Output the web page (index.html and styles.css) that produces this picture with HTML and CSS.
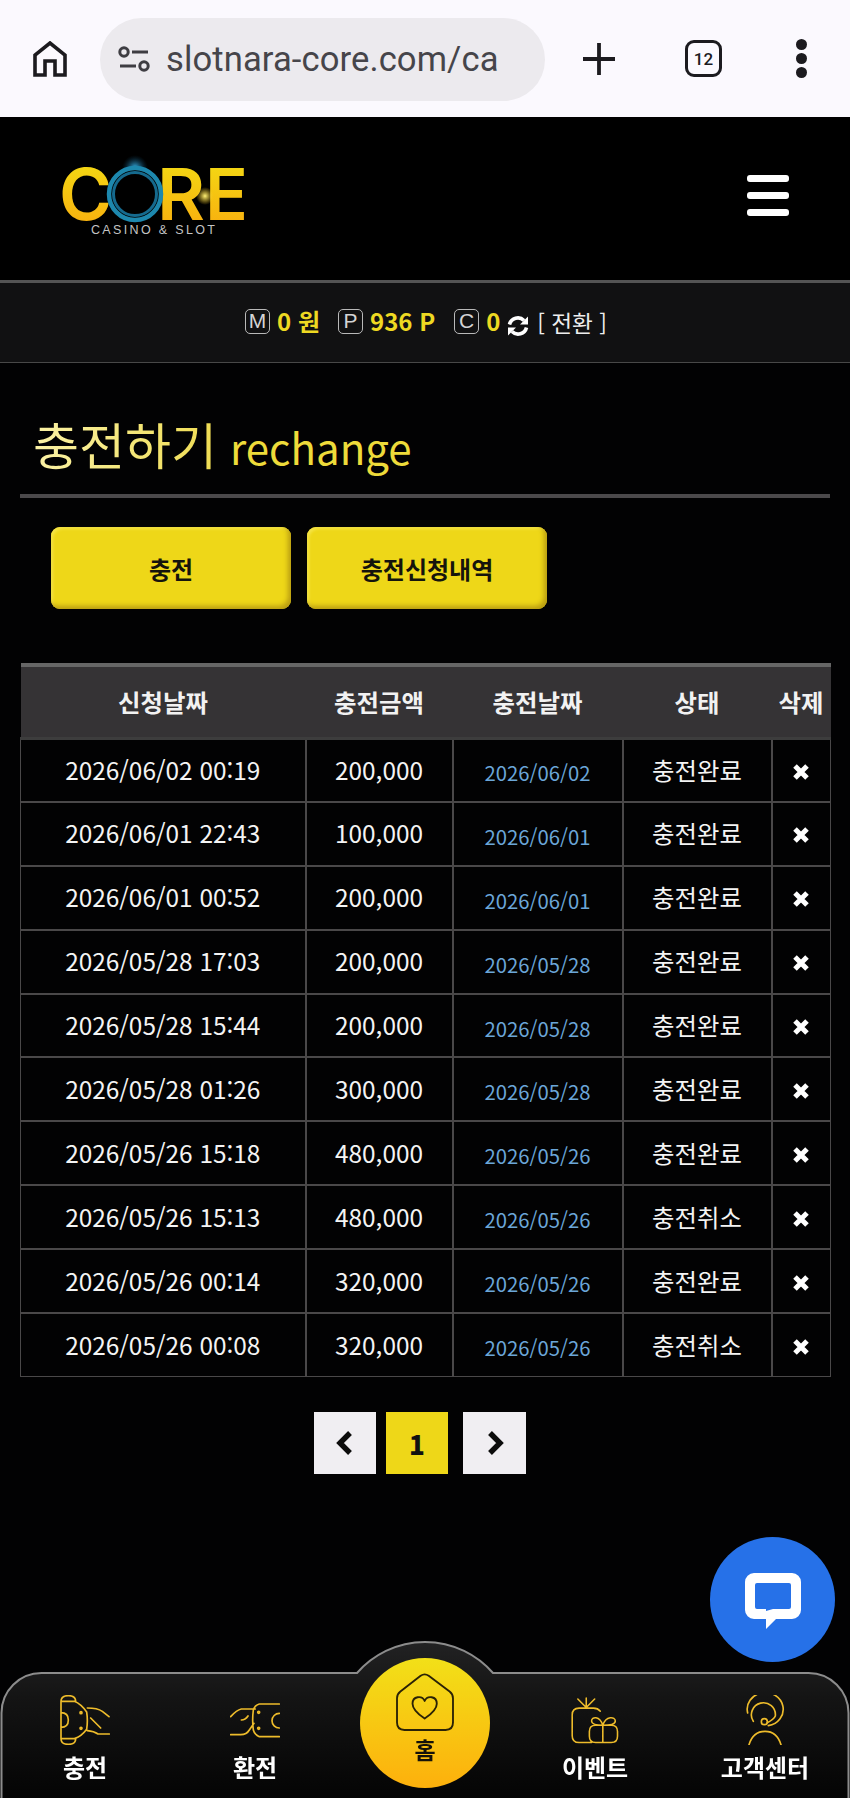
FILE: index.html
```html
<!DOCTYPE html>
<html lang="ko">
<head>
<meta charset="utf-8">
<title>충전하기</title>
<link rel="stylesheet" href="styles.css">
</head>
<body>
<div class="chrome">
  <svg class="chrome-home" viewBox="0 0 34 36"><path d="M2 34V14L17 2l15 12v20H22V20H12v14z"/></svg>
  <div class="url">
    <svg class="url-tune" viewBox="0 0 32 26"><circle cx="6" cy="6" r="4.2"/><path d="M14 6h16M2 20h16"/><circle cx="26" cy="20" r="4.2"/></svg>
    <span class="url-text">slotnara-core.com/ca</span>
  </div>
  <svg class="chrome-plus" viewBox="0 0 34 34"><path d="M17 1v32M1 17h32"/></svg>
  <div class="tabs-count">12</div>
  <div class="chrome-menu"><i></i><i></i><i></i></div>
</div>

<header class="site-head">
  <svg class="logo" viewBox="0 0 190 80">
    <defs>
      <linearGradient id="lg" x1="0" y1="0" x2="0" y2="1"><stop offset="0" stop-color="#f2e014"/><stop offset="1" stop-color="#f9a90e"/></linearGradient>
      <radialGradient id="fl"><stop offset="0" stop-color="#37b6f0"/><stop offset="1" stop-color="#0b3a55" stop-opacity="0"/></radialGradient>
      <radialGradient id="fy"><stop offset="0" stop-color="#fff27a"/><stop offset="1" stop-color="#f6c510" stop-opacity="0"/></radialGradient>
    </defs>
    <circle cx="75" cy="13" r="13" fill="url(#fl)"/>
    <text class="logo-l" x="-1" y="65" fill="url(#lg)">C</text>
    <text class="logo-l" x="97" y="65" fill="url(#lg)" textLength="48" lengthAdjust="spacingAndGlyphs">R</text>
    <text class="logo-l" x="145" y="65" fill="url(#lg)" textLength="43" lengthAdjust="spacingAndGlyphs">E</text>
    <circle cx="75" cy="39" r="26" class="ring"/>
    <circle cx="75" cy="39" r="21.5" class="ring-in"/>
    <circle cx="145" cy="41" r="9" fill="url(#fy)"/>
    <text class="logo-sub" x="31" y="78.5" textLength="124">CASINO &amp; SLOT</text>
  </svg>
  <div class="burger"><i></i><i></i><i></i></div>
</header>

<div class="info">
  <span class="badge">M</span><b class="val val-m">0 원</b>
  <span class="badge">P</span><b class="val val-p">936 P</b>
  <span class="badge">C</span><b class="val val-c">0</b>
  <svg class="sync" viewBox="0 0 24 24"><path class="sync-s" d="M3.5 10.5A8.6 8.6 0 0 1 18 6.5"/><path class="sync-f" d="M22 2.5v8h-8z"/><path class="sync-s" d="M20.5 13.5A8.6 8.6 0 0 1 6 17.5"/><path class="sync-f" d="M2 21.5v-8h8z"/></svg>
  <span class="switch">[ 전환 ]</span>
</div>

<main>
  <h1 class="title"><span class="title-ko">충전하기</span> <span class="title-en">rechange</span></h1>

  <div class="tabs">
    <a class="tab">충전</a>
    <a class="tab">충전신청내역</a>
  </div>

  <table class="list">
    <colgroup><col class="c1"><col class="c2"><col class="c3"><col class="c4"><col class="c5"></colgroup>
    <thead><tr><th>신청날짜</th><th>충전금액</th><th>충전날짜</th><th>상태</th><th>삭제</th></tr></thead>
    <tbody>
      <tr><td>2026/06/02 00:19</td><td>200,000</td><td class="date">2026/06/02</td><td>충전완료</td><td class="del"><svg viewBox="0 0 18 18"><path d="M3 3l12 12M15 3L3 15"/></svg></td></tr>
      <tr><td>2026/06/01 22:43</td><td>100,000</td><td class="date">2026/06/01</td><td>충전완료</td><td class="del"><svg viewBox="0 0 18 18"><path d="M3 3l12 12M15 3L3 15"/></svg></td></tr>
      <tr><td>2026/06/01 00:52</td><td>200,000</td><td class="date">2026/06/01</td><td>충전완료</td><td class="del"><svg viewBox="0 0 18 18"><path d="M3 3l12 12M15 3L3 15"/></svg></td></tr>
      <tr><td>2026/05/28 17:03</td><td>200,000</td><td class="date">2026/05/28</td><td>충전완료</td><td class="del"><svg viewBox="0 0 18 18"><path d="M3 3l12 12M15 3L3 15"/></svg></td></tr>
      <tr><td>2026/05/28 15:44</td><td>200,000</td><td class="date">2026/05/28</td><td>충전완료</td><td class="del"><svg viewBox="0 0 18 18"><path d="M3 3l12 12M15 3L3 15"/></svg></td></tr>
      <tr><td>2026/05/28 01:26</td><td>300,000</td><td class="date">2026/05/28</td><td>충전완료</td><td class="del"><svg viewBox="0 0 18 18"><path d="M3 3l12 12M15 3L3 15"/></svg></td></tr>
      <tr><td>2026/05/26 15:18</td><td>480,000</td><td class="date">2026/05/26</td><td>충전완료</td><td class="del"><svg viewBox="0 0 18 18"><path d="M3 3l12 12M15 3L3 15"/></svg></td></tr>
      <tr><td>2026/05/26 15:13</td><td>480,000</td><td class="date">2026/05/26</td><td>충전취소</td><td class="del"><svg viewBox="0 0 18 18"><path d="M3 3l12 12M15 3L3 15"/></svg></td></tr>
      <tr><td>2026/05/26 00:14</td><td>320,000</td><td class="date">2026/05/26</td><td>충전완료</td><td class="del"><svg viewBox="0 0 18 18"><path d="M3 3l12 12M15 3L3 15"/></svg></td></tr>
      <tr><td>2026/05/26 00:08</td><td>320,000</td><td class="date">2026/05/26</td><td>충전취소</td><td class="del"><svg viewBox="0 0 18 18"><path d="M3 3l12 12M15 3L3 15"/></svg></td></tr>
    </tbody>
  </table>

  <nav class="pager">
    <a class="pg"><svg viewBox="0 0 20 28"><path d="M15 4L5 14l10 10"/></svg></a>
    <a class="pg pg-on">1</a>
    <a class="pg pg-next"><svg viewBox="0 0 20 28"><path d="M5 4l10 10L5 24"/></svg></a>
  </nav>
</main>

<a class="chat">
  <svg viewBox="0 0 58 58"><path d="M10 1h38a9 9 0 0 1 9 9v28a9 9 0 0 1-9 9H32L22 57V47H10a9 9 0 0 1-9-9V10a9 9 0 0 1 9-9z" fill="#fff"/><path d="M13 11h32a2 2 0 0 1 2 2v22a2 2 0 0 1-2 2H30l-1 0-7 2v-2H13a2 2 0 0 1-2-2V13a2 2 0 0 1 2-2z" fill="#2671e8"/></svg>
</a>

<footer class="bottom">
  <svg class="bottom-bg" viewBox="0 0 850 156">
    <defs><linearGradient id="nb" x1="0" y1="0" x2="0" y2="1"><stop offset="0" stop-color="#222223"/><stop offset="0.35" stop-color="#141414"/><stop offset="1" stop-color="#040404"/></linearGradient></defs>
    <path d="M1.5 158V71A40 40 0 0 1 41.5 31H357A90 90 0 0 1 493 31H808.5A40 40 0 0 1 848.5 71V158z" fill="url(#nb)" stroke="#8c8c8c" stroke-width="2"/>
  </svg>
  <div class="bottom-grid">
    <a class="item">
      <svg class="ico" viewBox="180 193 150 150"><path d="M183 212q0-17 22-17t22 17M183 212v112q0 17 22 17t22-17M183 212h40q20 8 37 32 4 26 0 52-16 22-37 28h-40M183 246q22 0 22 22t-22 22M262 232q30 0 45 10l20 16M272 262l30 30M262 300q20 2 32 10h34"/><circle cx="243" cy="246" r="3"/><circle cx="243" cy="293" r="3"/></svg>
      <span class="lbl">충전</span>
    </a>
    <a class="item">
      <svg class="ico" viewBox="690 193 150 150"><path d="M838 220h-60q-14 4-18 18-4 30 0 60 4 14 18 20h60M838 248a21 21 0 0 0 0 44M692 258q18-20 32-23h42M692 312h30q18 0 26-14l14-20M724 268q12 0 20-12"/><circle cx="776" cy="245" r="3"/><circle cx="776" cy="293" r="3"/></svg>
      <span class="lbl">환전</span>
    </a>
    <a class="item item-home">
      <div class="home">
        <svg class="home-ico" viewBox="170 130 172 170"><path d="M243 137q12-8 24 0l62 47q10 8 10 20v72q0 22-22 22H195q-22 0-22-22v-72q0-12 10-20z"/><path d="M255 264c-24-16-36-30-36-44 0-22 28-26 36-8 8-18 36-14 36 8 0 14-12 28-36 44z"/></svg>
        <span class="lbl lbl-home">홈</span>
      </div>
    </a>
    <a class="item">
      <svg class="ico" viewBox="430 193 160 150"><path d="M527 240q-8-10-22-10h-46q-22 0-22 22v66q0 22 22 22h40M482 228v-30M482 228l-27-27M482 228l27-27M518 285h44q20 0 20 20v15q0 20-20 20h-50q-20 0-20-20v-15q0-20 20-20zM535 285v55M535 285c-30 0-36-6-36-14 0-14 26-18 36 14zM535 285c30 0 40-6 40-14 0-14-30-18-40 14z"/></svg>
      <span class="lbl">이벤트</span>
    </a>
    <a class="item">
      <svg class="ico" viewBox="945 193 150 150"><path d="M968 247a54 50 0 1 1 62 38M985 272a36 36 0 1 1 66-16q-4 10-24 20M972 342q12-40 48-40t48 40"/><circle cx="1018" cy="273" r="9"/></svg>
      <span class="lbl">고객센터</span>
    </a>
  </div>
</footer>
</body>
</html>
```

FILE: styles.css
```css
* { box-sizing: border-box; }
html, body { margin: 0; padding: 0; }
body {
  background: #020203;
  color: #fff;
  font-family: "Noto Sans CJK KR", "Noto Sans", sans-serif;
  min-height: 1798px;
  width: 850px;
  overflow: hidden;
}
a { color: inherit; text-decoration: none; }

/* browser bar */
.chrome {
  height: 117px;
  background: #fbf9fe;
  display: flex;
  align-items: center;
  padding-left: 33px;
}
.chrome-home { width: 34px; height: 36px; fill: none; stroke: #1c1b1f; stroke-width: 3.6; flex: none; margin-right: 33px; }
.url {
  width: 445px;
  height: 83px;
  margin-top: 1px;
  border-radius: 42px;
  background: #eceaee;
  display: flex;
  align-items: center;
  padding-left: 18px;
  overflow: hidden;
  flex: none;
}
.url-tune { width: 32px; height: 26px; fill: none; stroke: #3e3d42; stroke-width: 3; flex: none; margin-right: 16px; }
.url-text {
  font-family: Roboto, sans-serif;
  font-size: 34.6px;
  color: #46454a;
  white-space: nowrap;
  letter-spacing: 0.1px;
}
.chrome-plus { width: 34px; height: 34px; fill: none; stroke: #1c1b1f; stroke-width: 3.8; flex: none; margin-left: 37px; }
.tabs-count {
  width: 37px;
  height: 37px;
  margin-left: 69px;
  border: 3.6px solid #1c1b1f;
  border-radius: 9px;
  color: #1c1b1f;
  font-family: Roboto, sans-serif;
  font-size: 17px;
  font-weight: 500;
  display: flex;
  align-items: center;
  justify-content: center;
  flex: none;
}
.chrome-menu { display: flex; flex-direction: column; gap: 3px; margin-left: 74px; }
.chrome-menu i { width: 11px; height: 11px; border-radius: 50%; background: #1c1b1f; display: block; }

/* site head */
.site-head {
  height: 163px;
  background: #000;
  display: flex;
  align-items: flex-start;
  justify-content: space-between;
  padding: 38px 61px 0 60px;
}
.logo { width: 190px; height: 80px; display: block; overflow: visible; }
.logo-l { font-family: Inter, "Liberation Sans", sans-serif; font-size: 72px; font-weight: 600; }
.logo-sub { font-family: "Liberation Sans", sans-serif; font-size: 12.5px; fill: #c4c4c4; }
.ring { fill: #000; stroke: #1d88ae; stroke-width: 4.5; }
.ring-in { fill: #000; stroke: #156a8e; stroke-width: 3; }
.burger { display: flex; flex-direction: column; gap: 10px; margin-top: 20px; }
.burger i { width: 42px; height: 7px; border-radius: 3px; background: #fff; display: block; }

/* info */
.info {
  height: 83px;
  background: #111112;
  border-top: 3px solid #545454;
  border-bottom: 1px solid #484848;
  display: flex;
  align-items: center;
  padding-left: 245px;
}
.badge {
  width: 25px;
  height: 25px;
  border: 1.5px solid #b9b9b9;
  border-radius: 5px;
  color: #d4d4d4;
  font-family: "Liberation Sans", sans-serif;
  font-size: 21px;
  line-height: 22px;
  text-align: center;
  flex: none;
  margin-top: -3px;
}
.val { color: #eed922; font-size: 24px; line-height: 30px; font-weight: 700; margin-left: 7px; margin-top: -4px; white-space: nowrap; }
.val-m { margin-right: 18px; }
.val-p { margin-right: 19px; }
.sync { width: 24px; height: 24px; margin-left: 6px; margin-top: 6px; flex: none; }
.sync-s { fill: none; stroke: #fff; stroke-width: 3.6; }
.sync-f { fill: #fff; }
.switch { font-size: 22.6px; font-weight: 400; color: #eee; margin-left: 7px; white-space: nowrap; }

/* title */
.title {
  height: 135px;
  margin: 0 20px;
  padding: 44px 0 0 13px;
  border-bottom: 4px solid #4b494b;
  font-weight: 400;
  line-height: 72px;
  white-space: nowrap;
}
.title-ko {
  font-size: 50px;
  background: linear-gradient(90deg, #fbf2a6, #efdc52);
  -webkit-background-clip: text;
  background-clip: text;
  color: transparent;
}
.title-en { font-size: 42px; color: #eedb3a; margin-left: 4px; }

/* tabs */
.tabs { display: flex; gap: 16px; margin: 29px 0 0 51px; }
.tab {
  width: 240px;
  height: 82px;
  border-radius: 9px;
  background: #eed718;
  box-shadow: inset -3px -3px 5px #b99d12, inset 2px 2px 3px #f6e64a;
  color: #15140c;
  font-size: 24px;
  font-weight: 700;
  display: flex;
  align-items: center;
  justify-content: center;
}

/* table */
.list {
  width: 810px;
  margin: 54px 0 0 20px;
  border-collapse: collapse;
  table-layout: fixed;
}
.c1 { width: 285px; }
.c2 { width: 147px; }
.c3 { width: 170px; }
.c4 { width: 149px; }
.c5 { width: 59px; }
.list th {
  height: 73px;
  padding: 0;
  background: #353335;
  border-top: 4px solid #666;
  border-bottom: 3px solid #3d3d3d;
  font-size: 24.4px;
  font-weight: 700;
  color: #f2f2f2;
}
.list td {
  height: 63.9px;
  padding: 0 0 2px;
  border: 2px solid #4a4849;
  text-align: center;
  font-size: 24.4px;
  font-weight: 400;
  color: #f4f4f4;
  white-space: nowrap;
}
.list td:first-child { border-left-width: 1px; }
.list td:last-child { border-right-width: 1px; }
.list tr:last-child td { border-bottom-width: 1px; }
.list .date { font-size: 20.3px; color: #6ba6d8; padding: 4px 0 0; }
.del svg { width: 18px; height: 18px; display: block; margin: 5px auto 0; fill: none; stroke: #fff; stroke-width: 5; }

/* pager */
.pager { display: flex; margin: 35px 0 0 314px; }
.pg {
  width: 62px;
  height: 62px;
  background: #f0eef2;
  color: #111;
  font-family: "Noto Sans CJK KR", serif;
  font-size: 26px;
  font-weight: 900;
  display: flex;
  align-items: center;
  justify-content: center;
  margin-right: 10px;
}
.pg svg { width: 20px; height: 28px; fill: none; stroke: #0c0c0c; stroke-width: 5.4; }
.pg-on { background: #eed718; margin-right: 15px; }
.pg-next { width: 63px; }

/* chat */
.chat {
  position: fixed;
  right: 15px;
  bottom: 136px;
  width: 125px;
  height: 125px;
  border-radius: 50%;
  background: #2671e8;
  display: flex;
  align-items: center;
  justify-content: center;
}
.chat svg { width: 58px; height: 58px; margin-top: 3px; }

/* bottom nav */
.bottom {
  position: fixed;
  left: 0;
  right: 0;
  bottom: 0;
  height: 156px;
}
.bottom-bg { position: absolute; left: 0; top: 0; width: 850px; height: 156px; overflow: visible; }
.bottom-grid {
  position: relative;
  display: grid;
  grid-template-columns: repeat(5, 170px);
  padding-top: 53px;
}
.item { display: flex; flex-direction: column; align-items: center; }
.ico { width: 50px; height: 50px; fill: none; stroke: #eebc2b; stroke-width: 5; stroke-linecap: round; stroke-linejoin: round; display: block; }
.lbl { margin-top: 6px; font-size: 24px; line-height: 31px; font-weight: 700; color: #fff; white-space: nowrap; }
.item-home { margin-top: -37px; }
.home {
  width: 130px;
  height: 130px;
  border-radius: 50%;
  background: linear-gradient(180deg, #f2e018 0%, #fdb00c 100%);
  display: flex;
  flex-direction: column;
  align-items: center;
  padding-top: 15px;
}
.home-ico { width: 58px; height: 58px; fill: none; stroke: #2a2206; stroke-width: 5.5; stroke-linejoin: round; display: block; }
.lbl-home { color: #15120a; margin-top: 2px; line-height: 32px; font-size: 23px; }
```
